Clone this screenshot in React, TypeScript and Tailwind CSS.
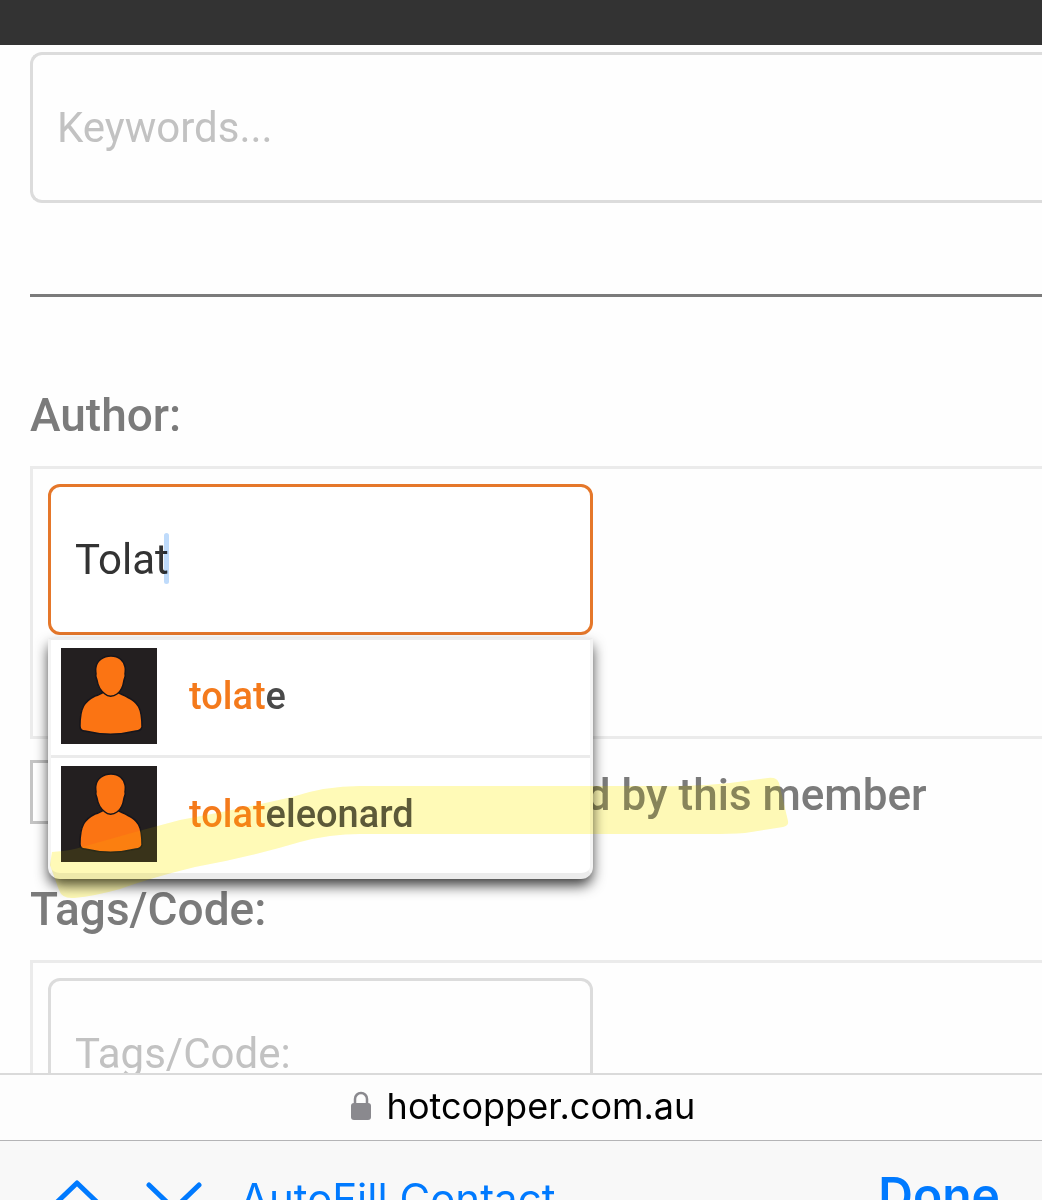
type Member = { match: string; rest: string };

const MEMBERS: Member[] = [
  { match: "tolat", rest: "e" },
  { match: "tolat", rest: "eleonard" },
];

const MARKER_PATH =
  "M22 107 Q40 106 52 102 Q100 88 150 75 Q210 64 262 52 Q295 41 330 41 L630 41 Q665 42 700 38 L738 33 Q747 32 749 38 L758 76 Q759 81 753 82 L715 88 Q700 89 680 89 L330 89 Q300 89 270 97 Q220 112 165 122 Q120 133 90 144 Q65 151 44 153 Q32 154 29 145 L20 120 Z";

function Avatar() {
  return (
    <svg className="size-24 shrink-0 bg-[#231f20]" viewBox="0 0 96 96" aria-hidden="true">
      <g fill="#fb7413" stroke="#15151c" strokeWidth="1.5">
        <path d="M34 48 C38 47 41 45 43 44 L56 44 C59 46 63 47 66 49 C77 54 81 60 81 79 C80 82 77 83 75 83 C59 87 40 87 24 83 C21 83 19 81 19 78 C19 59 24 53 34 48 Z" />
        <path d="M50 8 C58 8 63 13 64 19 C65 22 64 24 64 26 C65 28 64 30 63 32 C62 39 59 44 56 46 C52 49 47 49 44 46 C40 43 37 39 36 32 C35 30 34 28 35 26 C35 24 34 22 35 19 C36 13 42 8 50 8 Z" />
      </g>
    </svg>
  );
}

function SuggestionMenu() {
  return (
    <ul className="absolute inset-x-0 top-full mt-[3px] overflow-hidden rounded-b-xl border-x-[3px] border-t-2 border-b-[6px] border-[#ececec] border-x-[#f4f4f4] bg-white shadow-[0_7px_14px_-1px_rgba(0,0,0,0.8)]">
      {MEMBERS.map((m, i) => (
        <li key={i} className={i > 0 ? "border-t-[3px] border-[#ebebeb]" : ""}>
          <button type="button" className="flex w-full items-center gap-8 px-2.5 pt-2 pb-[11px] text-left text-[38px] leading-[48px] font-medium text-[#4a4a4a]">
            <Avatar />
            <span>
              <span className="text-[#f47a1c]">{m.match}</span>
              {m.rest}
            </span>
          </button>
        </li>
      ))}
    </ul>
  );
}

// Highlighter stroke drawn over the page
function Marker() {
  return (
    <>
      <svg className="pointer-events-none absolute top-[358px] left-0 z-20 h-40 w-[800px] mix-blend-multiply" viewBox="0 0 800 160" aria-hidden="true">
        <path d={MARKER_PATH} fill="#fffcc9" />
      </svg>
      <svg className="pointer-events-none absolute top-[358px] left-0 z-20 h-40 w-[800px]" viewBox="0 0 800 160" aria-hidden="true">
        <path d={MARKER_PATH} fill="#fff01e" fillOpacity="0.1" />
      </svg>
    </>
  );
}

function SearchForm() {
  return (
    <form className="flex flex-col pt-[7px] pl-[30px]">
      <input
        type="text"
        aria-label="Keywords"
        placeholder="Keywords..."
        className="h-[151px] w-full rounded-l-xl border-[3px] border-r-0 border-[#dcdcdc] px-6 text-[42px] placeholder:text-[#c2c2c2]"
      />
      <hr className="mt-[91px] border-t-[3px] border-[#7b7b7b]" />

      <div className="relative mt-[90px]">
        <label htmlFor="author" className="block text-[46px] leading-[56px] font-medium text-[#7b7b7b]">
          Author:
        </label>
        <div className="mt-[23px] h-[273px] border-[3px] border-r-0 border-[#ebebeb] p-[15px]">
          <div className="relative z-10 w-[545px]">
            <input
              id="author"
              type="text"
              defaultValue="Tolat"
              className="h-[151px] w-full rounded-xl border-[3px] border-[#e5772a] bg-white px-6 text-[42px] text-[#333] outline-none"
            />
            <span className="absolute top-[49px] left-[116px] h-[51px] w-[5px] rounded-full bg-[#bfdbfb] mix-blend-multiply" />
            <SuggestionMenu />
          </div>
        </div>
        <div className="mt-[21px] flex items-center">
          <input
            id="started"
            type="checkbox"
            className="size-16 shrink-0 appearance-none border-[3px] border-[#c4c4c4] bg-white"
          />
          <label htmlFor="started" className="ml-[376px] pt-1.5 text-[44px] leading-[56px] font-medium whitespace-nowrap text-[#7b7b7b]">
            started by this member
          </label>
        </div>
        <Marker />
      </div>

      <label htmlFor="tags" className="mt-[57px] block text-[46px] leading-[56px] font-medium text-[#7b7b7b]">
        Tags/Code:
      </label>
      <div className="mt-[23px] h-[273px] border-[3px] border-r-0 border-[#ebebeb] p-[15px]">
        <input
          id="tags"
          type="text"
          placeholder="Tags/Code:"
          className="h-[151px] w-[545px] rounded-xl border-[3px] border-[#dcdcdc] px-6 text-[42px] placeholder:text-[#c2c2c2]"
        />
      </div>
    </form>
  );
}

function AddressBar() {
  return (
    <div className="flex h-[67px] shrink-0 items-center justify-center gap-4 border-t-2 border-[#dadada] bg-[#fdfdfd] pb-1 pl-1 font-['Inter',sans-serif] text-[36px] text-black">
      <svg className="h-[30px] w-5" viewBox="0 0 20 30" aria-hidden="true">
        <path d="M4 13 V8 a6 6 0 0 1 12 0 V13" fill="none" stroke="#8a898e" strokeWidth="2.5" />
        <rect y="12" width="20" height="17" rx="3" fill="#8a898e" />
      </svg>
      <a href="#">hotcopper.com.au</a>
    </div>
  );
}

function KeyboardToolbar() {
  return (
    <div className="flex h-[60px] shrink-0 items-start overflow-hidden border-t border-[#b4b4b6] bg-[#f8f8f8] pr-[42px] pl-[50px] font-['Inter',sans-serif] text-[#007aff]">
      <button type="button" aria-label="Previous field" className="mt-9">
        <svg className="h-9 w-[55px]" viewBox="0 0 55 36" fill="none" stroke="currentColor" strokeWidth="5" strokeLinecap="round" strokeLinejoin="round">
          <path d="M2 30 L27 6 L52 30" />
        </svg>
      </button>
      <button type="button" aria-label="Next field" className="mt-9 ml-10">
        <svg className="h-9 w-[57px]" viewBox="0 0 57 36" fill="none" stroke="currentColor" strokeWidth="5" strokeLinecap="round" strokeLinejoin="round">
          <path d="M4 8 L29 32 L54 8" />
        </svg>
      </button>
      <button type="button" className="mt-[30px] ml-[38px] text-[42px] leading-[56px]">
        AutoFill Contact
      </button>
      <button type="button" className="mt-[26px] ml-auto text-[48px] leading-[56px] font-semibold">
        Done
      </button>
    </div>
  );
}

export default function App() {
  return (
    <div className="flex h-screen flex-col overflow-hidden bg-[#fefefe] font-['Roboto',sans-serif]">
      <header className="h-[45px] shrink-0 bg-[#333]" />
      <main className="min-h-0 flex-1 overflow-hidden">
        <SearchForm />
      </main>
      <AddressBar />
      <KeyboardToolbar />
    </div>
  );
}
